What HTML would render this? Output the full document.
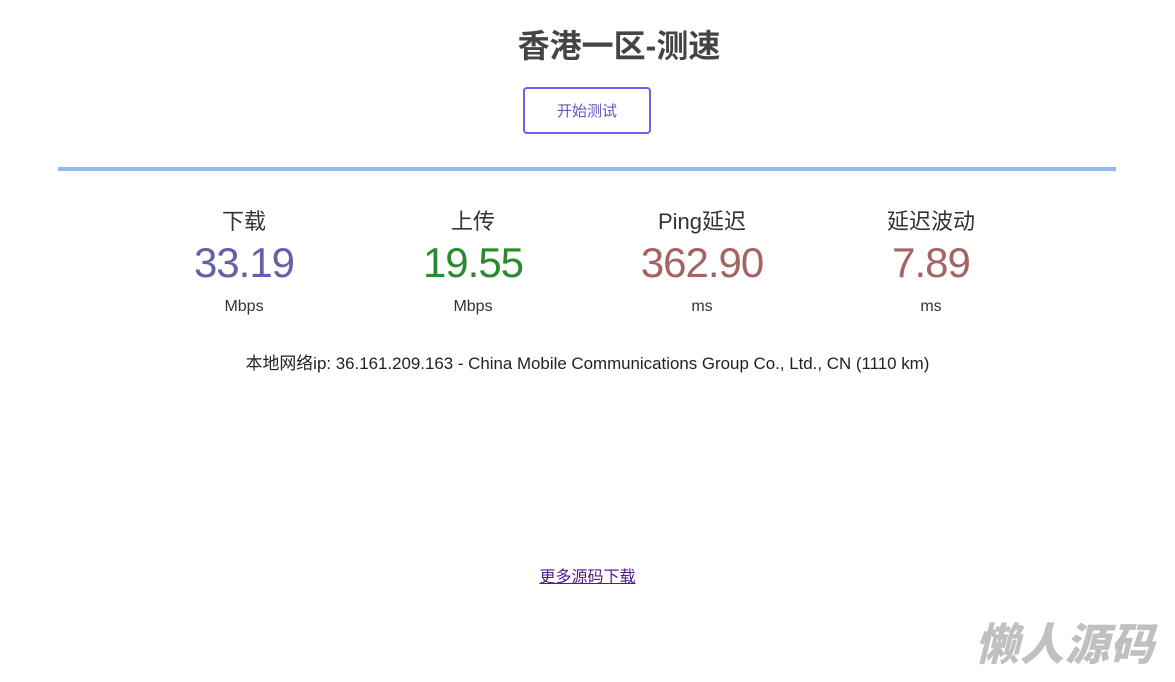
<!DOCTYPE html>
<html><head><meta charset="utf-8"><style>
body{margin:0;width:1175px;height:682px;background:#fff;font-family:"Liberation Sans","Noto Sans CJK SC",sans-serif;position:relative;overflow:hidden}
.a{position:absolute;white-space:nowrap}
h1{position:absolute;left:419px;width:400px;top:24px;margin:0;text-align:center;font-size:32px;font-weight:bold;color:#444;line-height:44px}
.btn{position:absolute;left:523px;top:87px;width:124px;height:43px;border:2px solid #6a63f0;border-radius:4px;text-align:center;line-height:45px;font-size:15px;color:#5e58b8}
.bar{position:absolute;left:58px;top:167px;width:1058px;height:4px;background:#93b6f4}
.col{position:absolute;top:205px;width:200px;text-align:center}
.l{font-size:22px;color:#333;line-height:34px}
.n{font-size:42px;line-height:46px;margin-top:1px;letter-spacing:-1px}
.u{font-size:16px;color:#333;line-height:20px;margin-top:11px}
</style></head><body>
<h1>香港一区-测速</h1>
<div class="btn">开始测试</div>
<div class="bar"></div>
<div class="col" style="left:144px"><div class="l">下载</div><div class="n" style="color:#6361a8">33.19</div><div class="u">Mbps</div></div>
<div class="col" style="left:373px"><div class="l">上传</div><div class="n" style="color:#2a8a2f">19.55</div><div class="u">Mbps</div></div>
<div class="col" style="left:602px"><div class="l">Ping延迟</div><div class="n" style="color:#a66363">362.90</div><div class="u">ms</div></div>
<div class="col" style="left:831px"><div class="l">延迟波动</div><div class="n" style="color:#a66363">7.89</div><div class="u">ms</div></div>
<div class="a" style="left:0;width:1175px;text-align:center;top:349px;font-size:16.9px;color:#222;">本地网络ip: 36.161.209.163 - China Mobile Communications Group Co., Ltd., CN (1110 km)</div>
<div class="a" style="left:0;width:1175px;text-align:center;top:563px;font-size:16px"><a style="color:#551a8b;text-decoration:underline">更多源码下载</a></div>
<div class="a" style="left:975px;top:618px;font-size:44px;font-weight:900;font-style:italic;color:#c0c0c0;letter-spacing:1px;line-height:56px">懒人源码</div>
</body></html>
